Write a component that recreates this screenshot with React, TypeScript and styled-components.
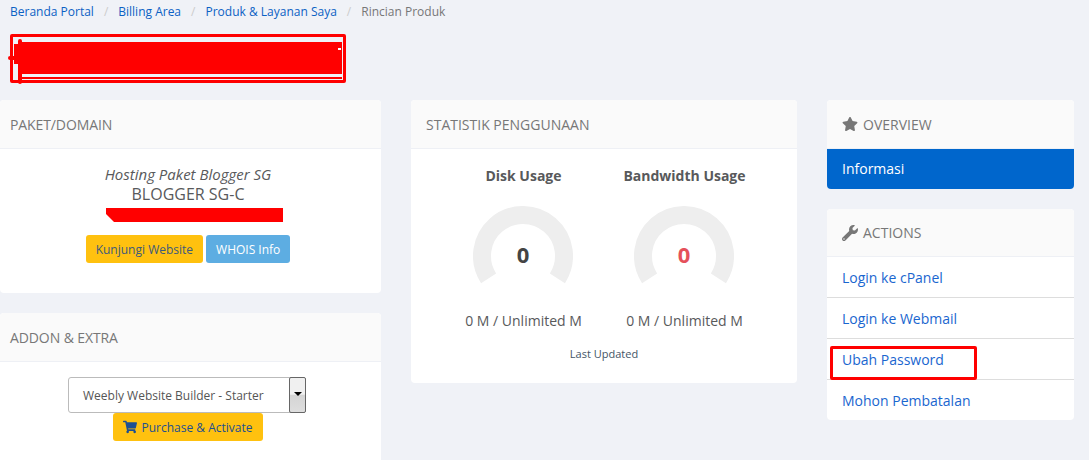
import React from "react";
import styled, { createGlobalStyle } from "styled-components";
import { FaStar, FaWrench, FaShoppingCart } from "react-icons/fa";

const Global = createGlobalStyle`
  html, body { margin: 0; padding: 0; background: #f0f2f7; }
  body { font-family: "Open Sans", "Liberation Sans", sans-serif; color: #58595b; }
`;
const Page = styled.div`
  position: relative;
  width: 1089px;
  height: 460px;
  overflow: hidden;
  background: #f0f2f7;
`;
const Crumbs = styled.nav`
  display: flex;
  height: 23px;
  padding-left: 10px;
  align-items: center;
  font-size: 12px;
  color: #777;
`;
const Crumb = styled.a`
  color: #0b61c4;
`;
const Sep = styled.span`
  color: #ccc;
  padding: 0 10px;
`;
const TitleBox = styled.div`
  position: relative;
  box-sizing: border-box;
  width: 336px;
  height: 49px;
  margin: 11px 0 17px 10px;
  border: 3px solid #f00;
  border-radius: 2px;
`;
const Columns = styled.div`
  display: grid;
  grid-template-columns: 381px 386px 247px;
  column-gap: 30px;
  align-items: start;
`;
const Stack = styled.div`
  display: flex;
  flex-direction: column;
  gap: ${(p: { $gap: number }) => p.$gap}px;
`;
const Panel = styled.section`
  background: #fff;
  border-radius: 4px;
  overflow: hidden;
`;
const Heading = styled.h3<{ $h?: number }>`
  box-sizing: border-box;
  display: flex;
  align-items: center;
  gap: 5px;
  height: ${(p) => p.$h ?? 49}px;
  margin: 0;
  padding: 0 15px;
  background: #fafafa;
  border-bottom: 1px solid #eef0f5;
  font-size: 14px;
  font-weight: 400;
  color: #777;
  text-transform: uppercase;
`;
const LeftHeading = styled(Heading)`
  padding-left: 10px;
  letter-spacing: -0.1px;
`;
const ProductBody = styled.div`
  height: 144px;
  box-sizing: border-box;
  padding: 15px 5px 0 0;
  text-align: center;
`;
const Plan = styled.div`
  font-size: 15px;
  font-style: italic;
  line-height: 20px;
`;
const PlanName = styled.div`
  font-size: 16px;
  line-height: 20px;
`;
const Domain = styled.div`
  position: relative;
  height: 23px;
  margin-bottom: 8px;
`;
const Buttons = styled.div`
  display: flex;
  justify-content: center;
  gap: 3px;
`;
const Btn = styled.button<{ $info?: boolean }>`
  box-sizing: border-box;
  height: 28px;
  padding: 0 10px;
  border: 0;
  border-radius: 3px;
  background: ${(p) => (p.$info ? "#5dade2" : "#ffc10f")};
  color: ${(p) => (p.$info ? "#fff" : "#3c5a7d")};
  font-family: inherit;
  font-size: 12px;
  display: inline-flex;
  align-items: center;
  gap: 4px;
`;
const AddonBody = styled.div`
  display: flex;
  flex-direction: column;
  align-items: center;
  height: 120px;
  padding: 15px 7px 0 0;
  box-sizing: border-box;
`;
const Select = styled.div`
  box-sizing: border-box;
  width: 238px;
  height: 36px;
  display: flex;
  align-items: stretch;
  border: 1px solid #bbb;
  border-radius: 3px;
  background: #fff;
  font-size: 12px;
  color: #555;
  flex: none;
`;
const SelectText = styled.span`
  flex: 1;
  padding-left: 14px;
  line-height: 36px;
`;
const SelectArrow = styled.span`
  width: 17px;
  display: flex;
  align-items: center;
  justify-content: center;
  padding-bottom: 3px;
  box-sizing: border-box;
  border: 1px solid #666;
  border-radius: 2px;
  margin: -1px;
  background: linear-gradient(#f0f0f0 48%, #d4d4d4 50%, #dedede);
  &::after {
    content: "";
    border: 4px solid transparent;
    border-top: 4px solid #000;
    border-bottom: 0;
  }
`;
const PurchaseBtn = styled(Btn)`
  color: #1d4f91;
  flex: none;
  margin-left: 2px;
  svg { font-size: 14px; }
`;
const StatsBody = styled.div`
  box-sizing: border-box;
  height: 234px;
  padding-top: 15px;
`;
const StatsRow = styled.div`
  display: grid;
  grid-template-columns: 161px 161px;
  justify-content: center;
`;
const Stat = styled.div`
  display: flex;
  flex-direction: column;
  align-items: center;
`;
const StatTitle = styled.div`
  font-size: 14px;
  font-weight: 700;
  line-height: 24px;
`;
const Gauge = styled.div`
  position: relative;
  width: 100px;
  height: 80px;
  margin: 18px 1px 25px 0;
`;
const GaugeValue = styled.span<{ $red?: boolean }>`
  position: absolute;
  left: 0;
  right: 0;
  top: 33px;
  text-align: center;
  font-size: 22px;
  font-weight: 700;
  line-height: 30px;
  color: ${(p) => (p.$red ? "#e5505a" : "#444")};
`;
const StatText = styled.div`
  font-size: 14px;
  line-height: 20px;
`;
const Updated = styled.div`
  margin-top: 15px;
  text-align: center;
  font-size: 11px;
  line-height: 16px;
  color: #456;
`;
const NavHeading = styled(Heading)`
  svg { font-size: 16px; color: #777; }
`;
const ActiveItem = styled.a`
  display: flex;
  align-items: center;
  box-sizing: border-box;
  height: 40px;
  padding: 0 15px 2px;
  background: #0066cc;
  color: #fff;
  font-size: 14px;
`;
const Item = styled.a`
  position: relative;
  display: flex;
  align-items: center;
  box-sizing: border-box;
  height: 41px;
  padding: 0 15px;
  color: #1a66cf;
  font-size: 14px;
  border-bottom: 1px solid #ddd;
  &:last-child { border-bottom: 0; height: 40px; }
`;
const Mark = styled.span`
  position: absolute;
  left: 3px;
  top: 7px;
  width: 147px;
  height: 34px;
  box-sizing: border-box;
  border: 3px solid #f00;
  border-radius: 2px;
`;
const Scribble = styled.svg`
  position: absolute;
  overflow: visible;
`;
const TitleScribble = styled(Scribble)`
  left: -6px;
  top: -3px;
`;
const DomainScribble = styled(Scribble)`
  left: 106px;
  top: 4px;
`;

const GaugeArc = () => (
  <svg width="100" height="80" viewBox="0 0 100 80">
    <path d="M15.6 72.3 A41 41 0 1 1 84.4 72.3" fill="none" stroke="#eeeeee" strokeWidth="18" />
  </svg>
);

const StatBlock = ({ title, red }: { title: string; red?: boolean }) => (
  <Stat>
    <StatTitle>{title}</StatTitle>
    <Gauge>
      <GaugeArc />
      <GaugeValue $red={red}>0</GaugeValue>
    </Gauge>
    <StatText>0 M / Unlimited M</StatText>
  </Stat>
);

export default function App() {
  return (
    <Page>
      <Global />
      <Crumbs>
        <Crumb>Beranda Portal</Crumb>
        <Sep>/</Sep>
        <Crumb>Billing Area</Crumb>
        <Sep>/</Sep>
        <Crumb>Produk &amp; Layanan Saya</Crumb>
        <Sep>/</Sep>
        <span>Rincian Produk</span>
      </Crumbs>
      <TitleBox>
        <TitleScribble width="336" height="49">
          <rect x="15" y="8" width="320" height="32" fill="#f00" />
          <path d="M15 44H335" stroke="#f00" strokeWidth="2" />
          <path d="M13 7V48M3 24H16" stroke="#f00" strokeWidth="4" strokeLinecap="round" />
          <rect x="7" y="10" width="9" height="20" fill="#f00" />
          <rect x="331" y="14" width="3" height="2" fill="#fff" />
        </TitleScribble>
      </TitleBox>
      <Columns>
        <Stack $gap={20}>
          <Panel>
            <LeftHeading>Paket/Domain</LeftHeading>
            <ProductBody>
              <Plan>Hosting Paket Blogger SG</Plan>
              <PlanName>BLOGGER SG-C</PlanName>
              <Domain>
                <DomainScribble width="177" height="14">
                  <path d="M0 0H177V14H8L0 6Z" fill="#f00" />
                </DomainScribble>
              </Domain>
              <Buttons>
                <Btn>Kunjungi Website</Btn>
                <Btn $info>WHOIS Info</Btn>
              </Buttons>
            </ProductBody>
          </Panel>
          <Panel>
            <LeftHeading>Addon &amp; Extra</LeftHeading>
            <AddonBody>
              <Select>
                <SelectText>Weebly Website Builder - Starter</SelectText>
                <SelectArrow />
              </Select>
              <PurchaseBtn>
                <FaShoppingCart />
                Purchase &amp; Activate
              </PurchaseBtn>
            </AddonBody>
          </Panel>
        </Stack>
        <Panel>
          <Heading>Statistik Penggunaan</Heading>
          <StatsBody>
            <StatsRow>
              <StatBlock title="Disk Usage" />
              <StatBlock title="Bandwidth Usage" red />
            </StatsRow>
            <Updated>Last Updated</Updated>
          </StatsBody>
        </Panel>
        <Stack $gap={20}>
          <Panel>
            <NavHeading>
              <FaStar />
              Overview
            </NavHeading>
            <ActiveItem>Informasi</ActiveItem>
          </Panel>
          <Panel>
            <NavHeading $h={48}>
              <FaWrench />
              Actions
            </NavHeading>
            <Item>Login ke cPanel</Item>
            <Item>Login ke Webmail</Item>
            <Item>
              Ubah Password
              <Mark />
            </Item>
            <Item>Mohon Pembatalan</Item>
          </Panel>
        </Stack>
      </Columns>
    </Page>
  );
}
